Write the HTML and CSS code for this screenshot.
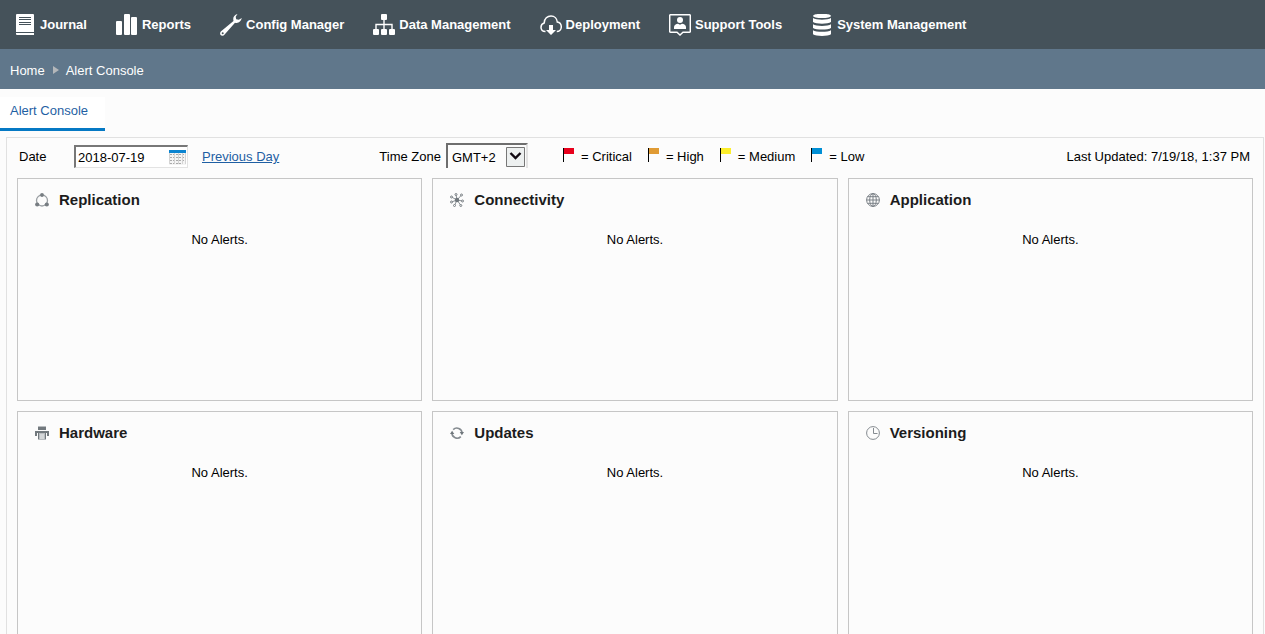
FILE: index.html
```html
<!DOCTYPE html>
<html lang="en">
<head>
    <meta charset="utf-8">
    <title>Alert Console</title>
    <link rel="stylesheet" href="styles.css">
</head>
<body>
    <nav class="main-nav">
        <a href="#">
            <svg class="nav-icon" viewBox="0 0 22 22"><path fill="#fff" d="M3 0h16a1 1 0 0 1 1 1v17H2V1a1 1 0 0 1 1-1zM2 19h18v2H3a1 1 0 0 1-1-1z"/><path stroke="#45525a" d="M5 3.500h12M5 5.500h12M5 8.500h12M5 10.500h12"/></svg>
            Journal
        </a>
        <a href="#">
            <svg class="nav-icon" viewBox="0 0 22 22" fill="#fff"><rect y="7" width="6" height="14" rx="1"/><rect x="8" width="6" height="21" rx="1"/><rect x="15" y="3" width="6" height="18" rx="1"/></svg>
            Reports
        </a>
        <a href="#">
            <svg class="nav-icon" viewBox="0 0 22 22"><path fill="#fff" d="M17.500 0C14 1 12.600 3.500 13.500 7L.8 17.600c-1.200 1.500-.8 3.200.7 3.900 1.200.5 2.300.1 3.100-1L15 8.700c3.500.8 6-1 6.800-4.700l-3 1.800-2.600-.6-.5-2.500z"/><circle cx="2.700" cy="19.200" r="1" fill="#45525a"/></svg>
            Config Manager
        </a>
        <a href="#">
            <svg class="nav-icon" viewBox="0 0 22 22" fill="#fff"><rect x="8" width="6" height="6" rx="1"/><rect y="15" width="6" height="6" rx="1"/><rect x="8" y="15" width="6" height="6" rx="1"/><rect x="16" y="15" width="6" height="6" rx="1"/><path fill="none" stroke="#fff" stroke-width="1.400" d="M11 5v11M3 16v-5.500h16V16"/></svg>
            Data Management
        </a>
        <a href="#">
            <svg class="nav-icon" viewBox="0 0 22 22"><path fill="none" stroke="#fff" stroke-width="1.500" d="M5.500 17.500C2.500 17.500 1 15.500 1 13.200 1 11 2.300 9.500 4.200 9 4.200 4.500 7.500 2 11 2c3.500 0 6 2.500 6.300 6 2.500.5 4 2.300 4 4.800 0 2.700-2 4.700-4.500 4.700"/><path fill="#fff" d="M9 11h4v5h3l-5 5-5-5h3z"/></svg>
            Deployment
        </a>
        <a href="#">
            <svg class="nav-icon" viewBox="0 0 22 22"><path fill="none" stroke="#fff" stroke-width="1.500" d="M1.500.7h19a.8.800 0 0 1 .8.800v16a.8.800 0 0 1-.8.800H14l-3 2.700-3-2.700H1.500a.8.800 0 0 1-.8-.8v-16a.8.800 0 0 1 .8-.8z"/><circle cx="11" cy="6" r="3" fill="#fff"/><path fill="#fff" d="M5 15v-2c0-2 2-3.300 4-3.300l2 1 2-1c2 0 4 1.300 4 3.300v2z"/></svg>
            Support Tools
        </a>
        <a href="#">
            <svg class="nav-icon" viewBox="0 0 22 22" fill="#fff"><ellipse cx="11" cy="1.900" rx="9" ry="2.200"/><path d="M2 4c3 2.200 15 2.200 18 0v4c-3 2.300-15 2.300-18 0zM2 10.300c3 2.200 15 2.200 18 0v3.600c-3 2.300-15 2.300-18 0zM2 16.200c3 2.200 15 2.200 18 0v4c-3 2.300-15 2.300-18 0z"/></svg>
            System Management
        </a>
    </nav>

    <div class="breadcrumb">
        <a href="#">Home</a>
        <span class="crumb-arrow"></span>
        <span>Alert Console</span>
    </div>

    <div class="tabs">
        <a class="tab" href="#">Alert Console</a>
    </div>

    <main class="panel">
        <form class="toolbar">
            <label class="date-label" for="date">Date</label>
            <div class="date-field">
                <input type="text" id="date" value="2018-07-19">
                <button type="button" class="calendar-button" aria-label="Calendar">
                    <svg width="17" height="15" viewBox="0 0 17 15"><path fill="#f4f4f4" d="M0 3h17v12H0z"/><path stroke="#aaa" stroke-dasharray="2 1" d="M1 4.500h15M1 7.500h15M1 10.500h15M1 13.500h11"/><path stroke="#d4d4d4" d="M.5 3v11M5.500 3v11M9.500 3v11M13.500 3v11M16.500 3v11"/><path fill="#0b84d0" d="M0 0h17v3H0z"/></svg>
                </button>
            </div>
            <a class="previous" href="#">Previous Day</a>
            <label class="zone-label" for="zone">Time Zone</label>
            <div class="zone-field">
                <select id="zone">
                    <option>GMT+2</option>
                </select>
                <svg class="zone-arrow" width="19" height="20" viewBox="0 0 19 20"><path fill="#edf0f0" stroke="#777" d="M.5.500h18v19H.5z"/><path fill="none" stroke="#100810" stroke-width="2.400" d="M4.500 6l5 5 5-5"/></svg>
            </div>
            <ul class="legend">
                <li><span class="flag critical"></span>= Critical</li>
                <li><span class="flag high"></span>= High</li>
                <li><span class="flag medium"></span>= Medium</li>
                <li><span class="flag low"></span>= Low</li>
            </ul>
            <span class="updated">Last Updated: 7/19/18, 1:37 PM</span>
        </form>

        <div class="cards">
            <section class="card">
                <h2>
                    <svg class="card-icon" viewBox="0 0 14 14"><circle cx="7" cy="7.500" r="5.500" fill="none" stroke="#9a9fa3" stroke-width="1.300"/><g fill="#777d82"><circle cx="7" cy="2" r="1.900"/><circle cx="2.200" cy="11.500" r="2.100"/><circle cx="11.800" cy="11.500" r="2.100"/></g></svg>
                    Replication
                </h2>
                <p>No Alerts.</p>
            </section>
            <section class="card">
                <h2>
                    <svg class="card-icon" viewBox="0 0 14 14"><path fill="none" stroke="#8a9095" d="M7 7L1.500 4M7 7L6 1.500M7 7l4.500-5M7 7l5.500 1M7 7l3.500 5M7 7l-2.500 5.500M7 7L1.500 9"/><circle cx="7" cy="7" r="2.200" fill="#6f767b"/><g fill="#fcfcfc" stroke="#777d82"><circle cx="1.500" cy="4" r="1"/><circle cx="6" cy="1.500" r="1"/><circle cx="11.500" cy="2" r="1"/><circle cx="12.500" cy="8" r="1"/><circle cx="10.800" cy="12.500" r="1"/><circle cx="4.500" cy="12.500" r="1"/><circle cx="1.500" cy="9" r="1"/></g></svg>
                    Connectivity
                </h2>
                <p>No Alerts.</p>
            </section>
            <section class="card">
                <h2>
                    <svg class="card-icon" viewBox="0 0 14 14" fill="none" stroke="#7b8187"><circle cx="7" cy="7" r="6.400"/><ellipse cx="7" cy="7" rx="3.300" ry="6.400"/><path d="M7 .5v13M.5 7h13M1.500 3.700h11M1.500 10.300h11"/></svg>
                    Application
                </h2>
                <p>No Alerts.</p>
            </section>
            <section class="card">
                <h2>
                    <svg class="card-icon" viewBox="0 0 14 14"><path fill="#72797e" d="M3 0h8v4H3zM0 5h14v5h-2V7H2v3H0z"/><path fill="#b9bdc0" d="M3 0h8v1H3zM3 7h8v7H3z"/><path fill="#72797e" d="M3 7h1v6H3zM10 7h1v6h-1z"/><path fill="#d4d7d9" d="M5 8h4v5H5z"/></svg>
                    Hardware
                </h2>
                <p>No Alerts.</p>
            </section>
            <section class="card">
                <h2>
                    <svg class="card-icon" viewBox="0 0 14 14"><path fill="none" stroke="#858b90" stroke-width="1.600" d="M3.200 3.600A5.200 5.200 0 0 1 12.100 7M10.800 10.600A5.200 5.200 0 0 1 1.900 7"/><path fill="#6f767b" d="M9.700 6H14l-2.100 3.200zM0 8h4.300L2.100 4.800z"/></svg>
                    Updates
                </h2>
                <p>No Alerts.</p>
            </section>
            <section class="card">
                <h2>
                    <svg class="card-icon" viewBox="0 0 14 14" fill="none" stroke="#858b90"><circle cx="7" cy="7" r="6.400"/><path d="M7.500 2v5.500h4"/></svg>
                    Versioning
                </h2>
                <p>No Alerts.</p>
            </section>
        </div>
    </main>
</body>
</html>
```
FILE: styles.css
```css
* {
    box-sizing: border-box;
}

body {
    display: flex;
    flex-direction: column;
    height: 100vh;
    margin: 0;
    overflow: hidden;
    background-color: #fcfcfc;
    color: #000;
    font-family: "Liberation Sans", Arial, sans-serif;
    font-size: 13px;
    line-height: 16px;
}

.main-nav {
    display: flex;
    flex-shrink: 0;
    gap: 29px;
    height: 49px;
    padding-left: 14px;
    background-color: #45525a;
}

.main-nav a {
    display: flex;
    align-items: center;
    gap: 4px;
    color: #fff;
    font-weight: bold;
    text-decoration: none;
    white-space: nowrap;
}

.nav-icon {
    width: 22px;
    height: 22px;
}

.breadcrumb {
    display: flex;
    flex-shrink: 0;
    align-items: center;
    height: 40px;
    padding: 4px 10px 0;
    background-color: #60778b;
    color: #fff;
}

.breadcrumb a {
    color: #fff;
    text-decoration: none;
}

.crumb-arrow {
    margin: 0 7px 2px 8px;
    border: 4px solid transparent;
    border-left: 6px solid #b4b7ba;
    border-right: 0;
}

.tabs {
    display: flex;
    flex-shrink: 0;
    padding-top: 8px;
}

.tab {
    padding: 6px 17px 9px 10px;
    border-bottom: 3px solid #0579c4;
    background-color: #fff;
    color: #1f5fa3;
    text-decoration: none;
}

.panel {
    flex: 1;
    min-height: 0;
    margin: 6px 1px 0 6px;
    padding: 0 10px;
    border: 1px solid #e1e1e1;
    border-bottom: 0;
}

.toolbar {
    display: flex;
    align-items: flex-start;
    height: 40px;
    padding: 5px 3px 0 2px;
}

.toolbar > label,
.toolbar > a,
.toolbar > span,
.legend {
    padding-top: 6px;
}

.date-label {
    width: 55px;
}

.date-field {
    display: flex;
    align-items: center;
    width: 114px;
    height: 23px;
    margin-top: 2px;
    padding-right: 1px;
    border: 2px solid #777;
    border-right: 1px solid #e3e3e3;
    border-bottom: 1px solid #e3e3e3;
    background-color: #fff;
}

.date-field input {
    flex: 1;
    min-width: 0;
    padding: 0 2px;
    border: 0;
    outline: 0;
    background: none;
    font-family: "Liberation Sans", Arial, sans-serif;
    font-size: 13px;
}

.calendar-button {
    display: flex;
    padding: 0;
    border: 0;
    background: none;
}

.previous {
    margin-left: 14px;
    color: #1f5fa3;
}

.zone-label {
    margin-left: 100px;
}

.zone-field {
    position: relative;
    width: 82px;
    height: 25px;
    margin: 0 35px 0 5px;
}

.zone-field select {
    width: 100%;
    height: 100%;
    padding: 2px 0 0 4px;
    border: 2px solid #6e6e6e;
    border-right-color: #e3e3e3;
    border-bottom: 0;
    border-radius: 0;
    appearance: none;
    background-color: #fcfcfc;
    color: #000;
    font-family: "Liberation Sans", Arial, sans-serif;
    font-size: 13px;
}

.zone-arrow {
    position: absolute;
    top: 4px;
    right: 3px;
    pointer-events: none;
}

.legend {
    display: flex;
    gap: 16px;
    margin: 0;
    padding-left: 0;
    list-style: none;
}

.legend li {
    display: flex;
    gap: 7px;
}

.flag {
    width: 11px;
    height: 14px;
    margin-top: -1px;
    border-left: 1px solid #000;
    background-repeat: no-repeat;
    background-size: 10px 6px;
}

.critical {
    background-image: linear-gradient(#e8001c, #e8001c);
}

.high {
    background-image: linear-gradient(#e09b34, #e09b34);
}

.medium {
    background-image: linear-gradient(#fcee2c, #fcee2c);
}

.low {
    background-image: linear-gradient(#008fd5, #008fd5);
}

.updated {
    margin-left: auto;
}

.cards {
    display: grid;
    grid-template-columns: repeat(3, 1fr);
    grid-template-rows: 223px 240px;
    gap: 10px;
}

.card {
    padding: 12px 17px;
    border: 1px solid #c6c6c6;
}

.card h2 {
    display: flex;
    align-items: center;
    gap: 10px;
    margin: 0 0 23px;
    color: #1c1c1c;
    font-size: 15px;
    line-height: 18px;
}

.card-icon {
    width: 14px;
    height: 14px;
}

.card p {
    margin: 0;
    text-align: center;
}
```
